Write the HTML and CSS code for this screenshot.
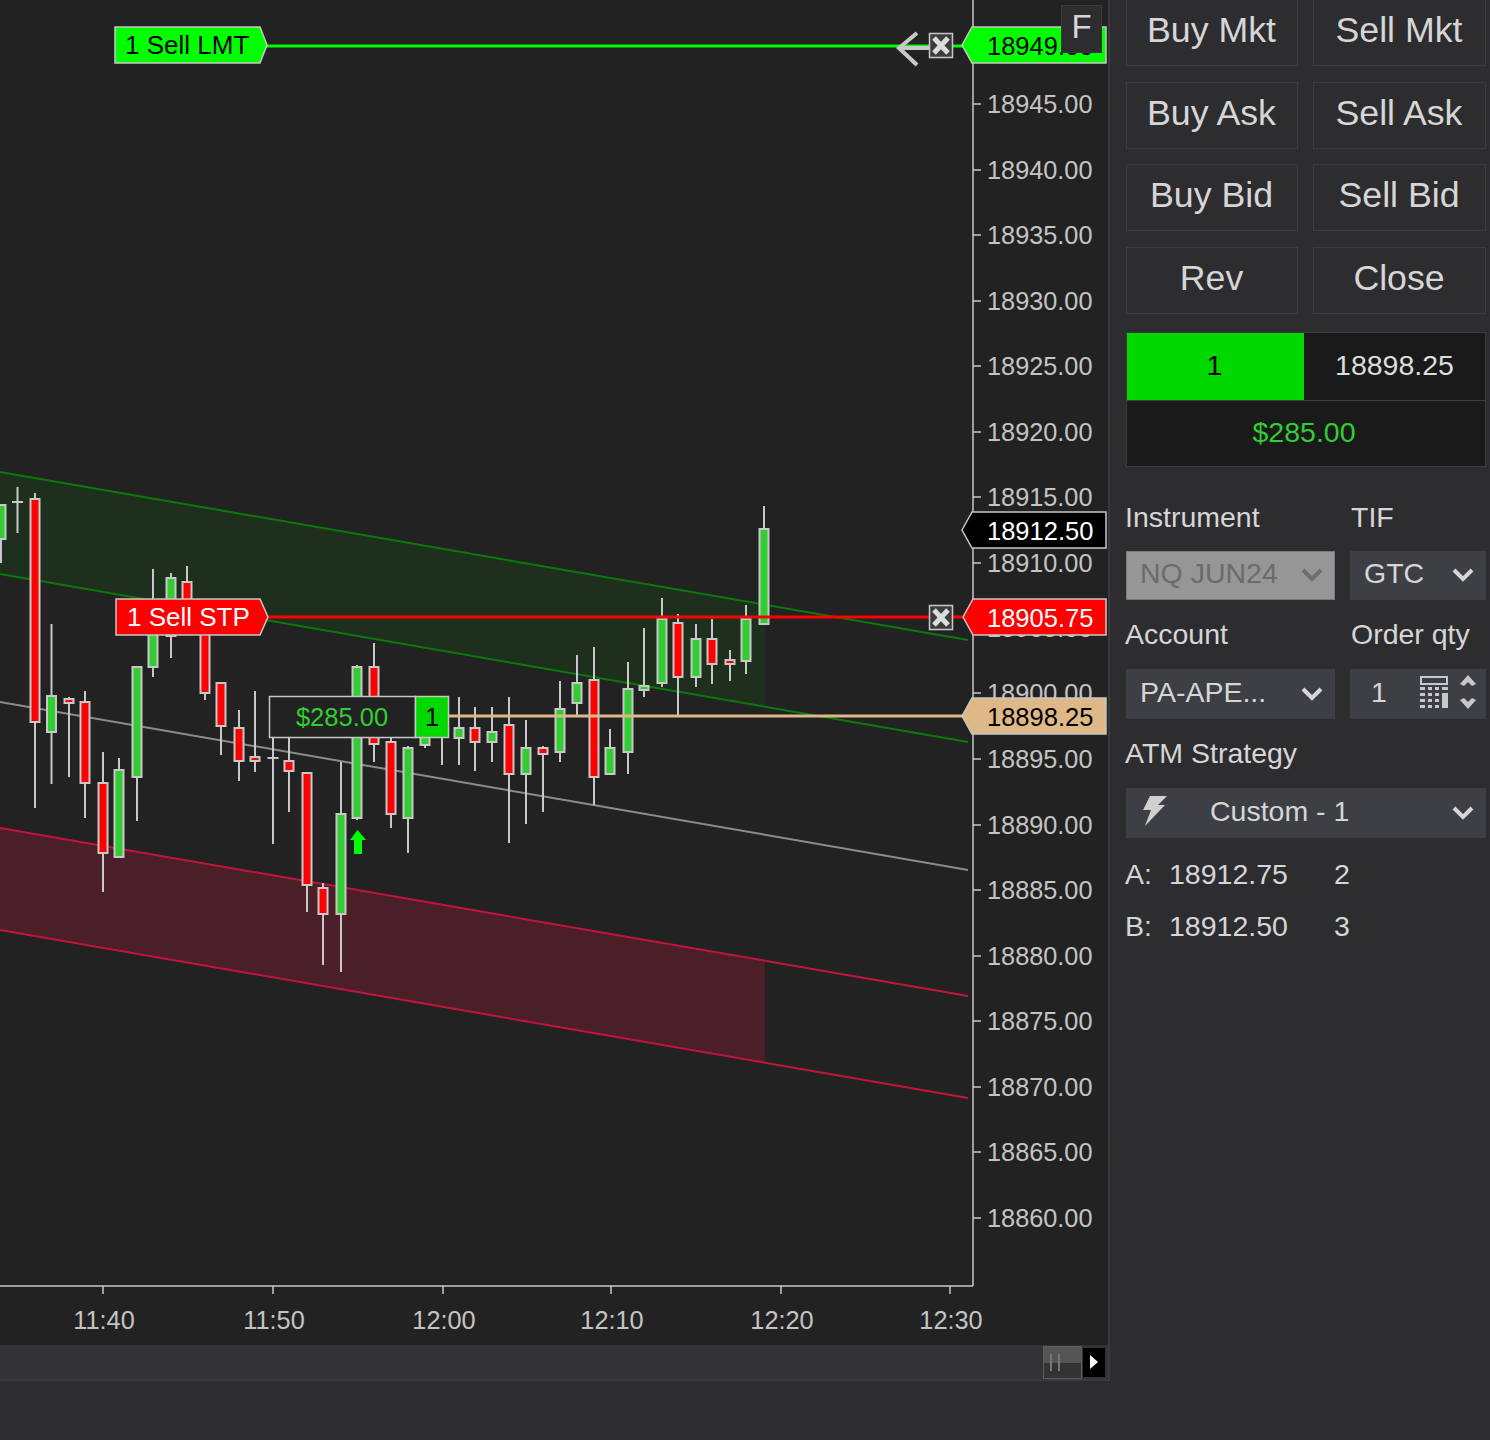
FILE: index.html
```html
<!DOCTYPE html>
<html lang="en">
<head>
  <meta charset="UTF-8" />
  <title>Chart Trader</title>
  <link rel="stylesheet" href="styles.css">
</head>
<body>
  <div class="app">
    <div class="chart-pane">
      <svg class="chart" id="chart" width="1108" height="1345" viewBox="0 0 1108 1345">
        <!-- channels -->
        <polygon class="band-green" points="0,472 765,605 765,706 0,574" />
        <polygon class="band-red" points="0,828 765,961 765,1063 0,930" />
        <line class="line-green" x1="0" y1="472" x2="968" y2="640" />
        <line class="line-green" x1="0" y1="574" x2="968" y2="742" />
        <line class="line-grey" x1="0" y1="702" x2="968" y2="870" />
        <line class="line-crimson" x1="0" y1="828" x2="968" y2="996" />
        <line class="line-crimson" x1="0" y1="930" x2="968" y2="1098" />

        <!-- axes, ticks and candles are filled in by script.js -->
        <g id="axis"></g>
        <g id="candles"></g>

        <!-- signal arrow -->
        <polygon class="signal" points="357.5,830 366,840 362,840 362,854 354,854 354,840 350,840" />

        <!-- order lines -->
        <line class="order-lmt" x1="266" y1="46" x2="964" y2="46" />
        <line class="order-stp" x1="266" y1="617" x2="964" y2="617" />
        <line class="order-pos" x1="449" y1="716" x2="964" y2="716" />

        <polygon class="tag tag-lmt" points="115,27 260,27 267,45 260,63 115,63" />
        <text class="label label-order label-dark" x="125" y="54">1 Sell LMT</text>
        <polygon class="tag tag-stp" points="116,599 260,599 268,617 260,635 116,635" />
        <text class="label label-order label-light" x="127" y="626">1 Sell STP</text>

        <!-- drag arrow and cancel boxes -->
        <path class="drag-arrow" d="M917 33 L899 48 L917 65 M899 48 H940" />
        <g class="cancel">
          <rect x="929.5" y="33.5" width="23" height="24" />
          <path d="M934 38 L948 53 M948 38 L934 53" />
        </g>
        <g class="cancel">
          <rect x="929.5" y="605.5" width="23" height="24" />
          <path d="M934 610 L948 625 M948 610 L934 625" />
        </g>

        <!-- pnl flag -->
        <rect class="pnl-box" x="269.5" y="696.5" width="146" height="41" />
        <text class="label pnl-text" x="342" y="726">$285.00</text>
        <rect class="pnl-qty" x="415.5" y="696.5" width="33" height="41" />
        <text class="label label-dark label-mid" x="432" y="726">1</text>

        <!-- price tags on the axis -->
        <polygon class="tag tag-lmt" points="962,45 972,27 1106,27 1106,63 972,63" />
        <text class="label label-dark" x="987" y="55">18949.00</text>
        <polygon class="tag tag-last" points="962,530 972,512 1106,512 1106,548 972,548" />
        <text class="label label-light" x="987" y="540">18912.50</text>
        <polygon class="tag tag-stp" points="963,617 973,599 1106,599 1106,635 973,635" />
        <text class="label label-light" x="987" y="627">18905.75</text>
        <polygon class="tag tag-pos" points="962,716 972,698 1106,698 1106,734 972,734" />
        <text class="label label-dark" x="987" y="726">18898.25</text>
      </svg>

      <div class="fkey">F</div>

      <div class="scrollbar">
        <div class="thumb"><span class="grip"></span><span class="grip"></span></div>
        <div class="scroll-btn"><span class="scroll-arrow"></span></div>
      </div>
    </div>

    <div class="side">
      <div class="order-buttons">
        <button class="order-btn">Buy Mkt</button>
        <button class="order-btn">Sell Mkt</button>
        <button class="order-btn">Buy Ask</button>
        <button class="order-btn">Sell Ask</button>
        <button class="order-btn">Buy Bid</button>
        <button class="order-btn">Sell Bid</button>
        <button class="order-btn">Rev</button>
        <button class="order-btn">Close</button>
      </div>

      <div class="position">
        <div class="pos-qty">1</div>
        <div class="pos-price">18898.25</div>
        <div class="pos-pnl">$285.00</div>
      </div>

      <div class="form">
        <div class="field-label">Instrument</div>
        <div class="field-label field-right">TIF</div>
        <div class="select select-disabled">
          <span>NQ JUN24</span>
          <svg class="chevron" width="22" height="14" viewBox="0 0 22 14"><path d="M2 2 L11 11 L20 2" /></svg>
        </div>
        <div class="select">
          <span>GTC</span>
          <svg class="chevron" width="22" height="14" viewBox="0 0 22 14"><path d="M2 2 L11 11 L20 2" /></svg>
        </div>
        <div class="field-label">Account</div>
        <div class="field-label field-right">Order qty</div>
        <div class="select">
          <span>PA-APE...</span>
          <svg class="chevron" width="22" height="14" viewBox="0 0 22 14"><path d="M2 2 L11 11 L20 2" /></svg>
        </div>
        <div class="select qty">
          <span>1</span>
          <svg class="calc" width="29" height="33" viewBox="0 0 29 33">
            <rect class="calc-screen" x="1" y="1" width="26" height="7" />
            <path class="calc-keys" d="M0 11h5v3h-5z M8 11h4v3h-4z M15 11h4v3h-4z M22 11h6v3h-6z M0 17h5v3h-5z M8 17h4v3h-4z M15 17h4v3h-4z M22 17h6v15h-6z M0 23h5v3h-5z M8 23h4v3h-4z M15 23h4v3h-4z M0 29h5v3h-5z M8 29h4v3h-4z M15 29h4v3h-4z" />
          </svg>
          <svg class="spin" width="16" height="34" viewBox="0 0 16 34">
            <path d="M8 0 L16 9 L12 11 L8 7 L4 11 L0 9 Z" />
            <path d="M8 34 L16 25 L12 23 L8 27 L4 23 L0 25 Z" />
          </svg>
        </div>
        <div class="field-label wide">ATM Strategy</div>
        <div class="select wide atm">
          <svg class="bolt" width="24" height="30" viewBox="0 0 24 30"><polygon points="7,0 24,0 15,9 22,9 2,30 8,14 0,14" /></svg>
          <span class="atm-name">Custom - 1</span>
          <svg class="chevron" width="22" height="14" viewBox="0 0 22 14"><path d="M2 2 L11 11 L20 2" /></svg>
        </div>
      </div>

      <div class="quotes">
        <div class="quote"><span class="q-side">A:</span><span class="q-price">18912.75</span><span>2</span></div>
        <div class="quote"><span class="q-side">B:</span><span class="q-price">18912.50</span><span>3</span></div>
      </div>
    </div>
  </div>

  <script src="script.js"></script>
</body>
</html>
```

FILE: styles.css
```css
* {
  box-sizing: border-box;
}
body {
  margin: 0;
  height: 1440px;
  overflow: hidden;
  background-color: #2d2d30;
  font-family: "Liberation Sans", Arial, sans-serif;
  color: #d6d6d6;
}
.app {
  display: flex;
  align-items: flex-start;
}

/* chart */
.chart-pane {
  position: relative;
  width: 1110px;
  height: 1381px;
  flex: none;
  border-right: 2px solid #3a3a3d;
  border-bottom: 2px solid #3a3a3d;
  background-color: #222222;
}
.chart {
  display: block;
}
.band-green {
  fill: #1e2f1e;
}
.band-red {
  fill: #4a1f27;
}
.line-green {
  stroke: #0a7a0a;
  stroke-width: 2;
}
.line-grey {
  stroke: #8c8c8c;
  stroke-width: 2;
}
.line-crimson {
  stroke: #c4143c;
  stroke-width: 2;
}
.axis-line,
.tick {
  stroke: #c8c8c8;
  stroke-width: 1.5;
}
.axis-text {
  font-size: 25.3px;
  fill: #c4c4c4;
}
.wick {
  stroke: #c8c8c8;
  stroke-width: 2;
}
.body-up {
  fill: #32cd32;
  stroke: #c8c8c8;
  stroke-width: 2;
}
.body-down {
  fill: #ff0000;
  stroke: #c8c8c8;
  stroke-width: 2;
}
.signal {
  fill: #00ff00;
}
.order-lmt {
  stroke: #00ff00;
  stroke-width: 3;
}
.order-stp {
  stroke: #ff0000;
  stroke-width: 3;
}
.order-pos {
  stroke: #deb887;
  stroke-width: 3;
}
.tag {
  stroke: #c8c8c8;
  stroke-width: 1.5;
}
.tag-lmt {
  fill: #00ff00;
}
.tag-stp {
  fill: #ff0000;
}
.tag-last {
  fill: #000000;
}
.tag-pos {
  fill: #deb887;
}
.label {
  font-size: 25.5px;
}
.label-order {
  font-size: 26px;
}
.label-dark {
  fill: #000000;
}
.label-light {
  fill: #ffffff;
}
.label-mid {
  text-anchor: middle;
}
.drag-arrow {
  fill: none;
  stroke: #c8c8c8;
  stroke-width: 4;
}
.cancel rect {
  fill: #3c3c3c;
  stroke: #c8c8c8;
  stroke-width: 1.5;
}
.cancel path {
  fill: none;
  stroke: #dcdcdc;
  stroke-width: 5;
}
.pnl-box {
  fill: #222222;
  stroke: #c8c8c8;
  stroke-width: 1.5;
}
.pnl-text {
  fill: #32cd32;
  text-anchor: middle;
}
.pnl-qty {
  fill: #00d800;
  stroke: #c8c8c8;
  stroke-width: 1.5;
}
.fkey {
  position: absolute;
  left: 1061px;
  top: 5px;
  width: 41px;
  height: 48px;
  border: 1.5px solid #3a3a3d;
  background-color: #2d2d30;
  color: #d6d6d6;
  font-size: 33px;
  line-height: 42px;
  text-align: center;
}

/* scrollbar below the chart */
.scrollbar {
  display: flex;
  justify-content: flex-end;
  align-items: center;
  height: 34px;
  padding-right: 3px;
  background-color: #333335;
}
.thumb {
  display: flex;
  justify-content: flex-start;
  align-items: center;
  gap: 6px;
  width: 39px;
  height: 33px;
  padding-left: 6px;
  border: 1px solid #5c5c5c;
  background: linear-gradient(#555555 0, #555555 50%, #333333 50%, #333333 100%);
}
.grip {
  width: 2px;
  height: 17px;
  background-color: #777777;
}
.scroll-btn {
  display: flex;
  justify-content: center;
  align-items: center;
  width: 22px;
  height: 29px;
  margin-left: 1px;
  background-color: #000000;
}
.scroll-arrow {
  width: 0;
  height: 0;
  border-left: 8px solid #ffffff;
  border-top: 7px solid transparent;
  border-bottom: 7px solid transparent;
}

/* order panel */
.side {
  flex: 1;
  padding: 0 4px 0 16px;
}
.order-buttons {
  display: grid;
  grid-template-columns: 172px 173px;
  grid-auto-rows: 67px;
  column-gap: 15px;
  row-gap: 15.5px;
  margin-top: -1px;
}
.order-btn {
  padding: 0 1px 4px 0;
  border: 1.5px solid #3c3c3f;
  background-color: #2d2d30;
  color: #d6d6d6;
  font-family: inherit;
  font-size: 35.7px;
}
.position {
  display: grid;
  grid-template-columns: 177px 1fr;
  grid-template-rows: 67px 65px;
  row-gap: 1px;
  height: 135px;
  margin-top: 18px;
  padding: 1px;
  background-color: #3c3c3f;
  font-size: 28.5px;
}
.position div {
  display: flex;
  justify-content: center;
  align-items: center;
  padding-bottom: 1px;
}
.pos-qty {
  background-color: #00d800;
  color: #000000;
  padding-right: 2px;
}
.pos-price {
  background-color: #1a1a1a;
  color: #dddddd;
}
.pos-pnl {
  grid-column: 1 / 3;
  background-color: #1a1a1a;
  color: #32cd32;
  padding-right: 4px;
}
.form {
  display: grid;
  grid-template-columns: 209px 136px;
  grid-template-rows: 67px 49px 69px 50px 69px 50px;
  column-gap: 15px;
  margin-top: 17px;
  font-size: 28.5px;
}
.field-label {
  display: flex;
  align-items: center;
  margin-left: -1px;
}
.field-right {
  margin-left: 1px;
}
.wide {
  grid-column: 1 / 3;
}
.select {
  display: flex;
  justify-content: space-between;
  align-items: center;
  padding: 0 12px 3px 14px;
  background-color: #3e3e45;
  color: #d6d6d6;
}
.select svg {
  margin-top: 3px;
}
.select-disabled {
  border: 1.5px solid #7a7a7a;
  background-color: #969696;
  color: #6b6b6b;
  padding: 0 11px 3px 13px;
}
.select-disabled .chevron path {
  stroke: #6e6e6e;
}
.chevron path {
  fill: none;
  stroke: #d6d6d6;
  stroke-width: 4;
}
.qty {
  padding-left: 21px;
  padding-right: 10px;
}
.qty svg {
  margin-top: 0;
}
.calc {
  margin-left: auto;
  margin-right: 11px;
}
.calc-screen {
  fill: none;
  stroke: #c8c8c8;
  stroke-width: 2;
}
.calc-keys {
  fill: #c8c8c8;
}
.spin path {
  fill: #c8c8c8;
}
.atm {
  justify-content: flex-start;
  padding-left: 17px;
}
.atm .bolt {
  margin-top: 0;
}
.bolt polygon {
  fill: #d0d0d0;
}
.atm-name {
  margin-left: 43px;
}
.atm .chevron {
  margin-left: auto;
}
.quotes {
  margin-top: 11px;
}
.quote {
  display: flex;
  align-items: center;
  height: 52px;
  margin-left: -1px;
  font-size: 28.5px;
}
.q-side {
  width: 44px;
}
.q-price {
  width: 165px;
}
```

FILE: script.js
```js
const svgNS = 'http://www.w3.org/2000/svg';

function add(parent, tag, attrs, text) {
  const el = document.createElementNS(svgNS, tag);
  for (const k in attrs) el.setAttribute(k, attrs[k]);
  if (text) el.textContent = text;
  parent.appendChild(el);
  return el;
}

// axes
const axis = document.getElementById('axis');
add(axis, 'line', { class: 'axis-line', x1: 973, y1: 0, x2: 973, y2: 1286 });
add(axis, 'line', { class: 'axis-line', x1: 0, y1: 1286, x2: 973, y2: 1286 });

const prices = [
  [104, '18945.00'], [170, '18940.00'], [235, '18935.00'], [301, '18930.00'],
  [366, '18925.00'], [432, '18920.00'], [497, '18915.00'], [563, '18910.00'],
  [628, '18905.00'], [693, '18900.00'], [759, '18895.00'], [825, '18890.00'],
  [890, '18885.00'], [956, '18880.00'], [1021, '18875.00'], [1087, '18870.00'],
  [1152, '18865.00'], [1218, '18860.00']
];
prices.forEach(([y, txt]) => {
  add(axis, 'line', { class: 'tick', x1: 973, y1: y, x2: 981, y2: y });
  add(axis, 'text', { class: 'axis-text', x: 987, y: y + 9 }, txt);
});

const times = [[103, '11:40'], [273, '11:50'], [443, '12:00'], [611, '12:10'], [781, '12:20'], [950, '12:30']];
times.forEach(([x, txt]) => {
  add(axis, 'line', { class: 'tick', x1: x, y1: 1286, x2: x, y2: 1294 });
  add(axis, 'text', { class: 'axis-text', x: x + 1, y: 1329, 'text-anchor': 'middle' }, txt);
});

// x, wick top, wick bottom, body top, body bottom, up/down
const candles = [
  [1, 505, 563, 505, 539, 'up'], [17.5, 487, 533, 502, 502, 'doji'], [35, 493, 808, 499, 722, 'down'],
  [51.5, 624, 784, 696, 732, 'up'], [69, 697, 777, 699, 703, 'down'], [85, 691, 818, 702, 783, 'down'],
  [103, 752, 892, 783, 853, 'down'], [119, 758, 857, 770, 857, 'up'], [137, 667, 821, 667, 777, 'up'],
  [153, 569, 677, 620, 667, 'up'], [171, 573, 658, 578, 636, 'up'], [187, 566, 625, 582, 620, 'down'],
  [205, 625, 700, 625, 693, 'down'], [221, 683, 755, 683, 726, 'down'], [239, 710, 781, 728, 761, 'down'],
  [255, 691, 772, 757, 761, 'down'], [273, 720, 844, 758, 758, 'doji'], [289, 720, 812, 761, 771, 'down'],
  [307, 772, 912, 773, 885, 'down'], [323, 883, 965, 888, 914, 'down'], [341, 762, 972, 814, 914, 'up'],
  [357, 665, 820, 667, 818, 'up'], [374, 643, 762, 667, 744, 'down'], [391, 730, 828, 742, 814, 'down'],
  [408, 746, 853, 748, 818, 'up'], [425, 725, 748, 725, 745, 'up'], [442, 720, 765, 720, 720, 'doji'],
  [459, 697, 765, 728, 738, 'up'], [475, 707, 771, 728, 742, 'down'], [492, 707, 762, 732, 742, 'up'],
  [509, 697, 843, 725, 774, 'down'], [526, 720, 824, 748, 774, 'up'], [543, 746, 812, 748, 754, 'down'],
  [560, 681, 762, 709, 752, 'up'], [577, 655, 715, 683, 703, 'up'], [594, 647, 805, 680, 777, 'down'],
  [610, 729, 774, 748, 774, 'up'], [628, 662, 774, 689, 752, 'up'], [644, 628, 697, 686, 690, 'up'],
  [662, 598, 687, 619, 683, 'up'], [678, 614, 715, 623, 677, 'down'], [696, 624, 687, 639, 677, 'up'],
  [712, 619, 684, 639, 664, 'down'], [730, 650, 681, 660, 664, 'down'], [746, 605, 674, 619, 661, 'up'],
  [764, 506, 624, 529, 624, 'up']
];

const group = document.getElementById('candles');
candles.forEach(([x, wt, wb, bt, bb, dir]) => {
  add(group, 'line', { class: 'wick', x1: x, y1: wt, x2: x, y2: wb });
  if (dir === 'doji') {
    add(group, 'line', { class: 'wick', x1: x - 5.5, y1: bt, x2: x + 5.5, y2: bt });
  } else {
    add(group, 'rect', {
      class: dir === 'up' ? 'body-up' : 'body-down',
      x: x - 4.5, y: bt, width: 9, height: bb - bt
    });
  }
});
```
